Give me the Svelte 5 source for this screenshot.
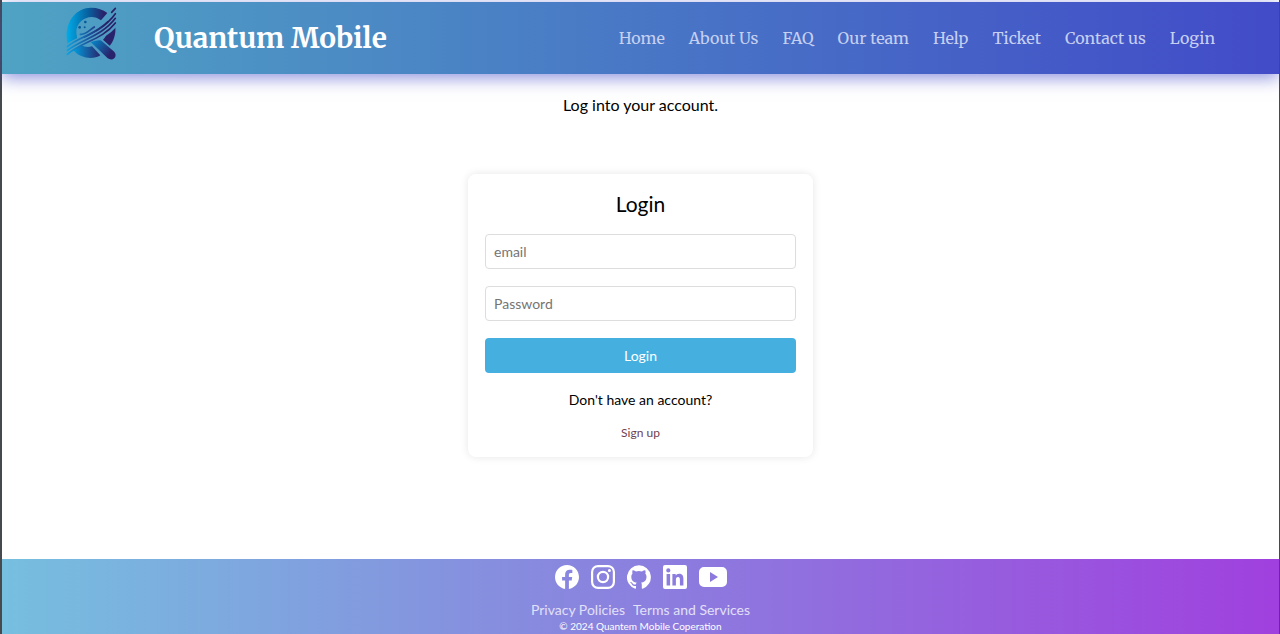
<script lang="ts">
  const navLinks = ['Home', 'About Us', 'FAQ', 'Our team', 'Help', 'Ticket', 'Contact us', 'Login'];

  const socials = [
    {
      name: 'Facebook',
      width: 24,
      path: 'M24 12.07C24 5.4 18.63 0 12 0S0 5.4 0 12.07C0 18.1 4.39 23.09 10.13 24v-8.44H7.08v-3.49h3.05V9.41c0-3.02 1.79-4.69 4.53-4.69 1.31 0 2.68.24 2.68.24v2.97h-1.51c-1.49 0-1.95.93-1.95 1.88v2.26h3.32l-.53 3.49h-2.79V24C19.61 23.09 24 18.1 24 12.07z'
    },
    {
      name: 'Instagram',
      width: 24,
      path: 'M7 0h10a7 7 0 0 1 7 7v10a7 7 0 0 1-7 7H7a7 7 0 0 1-7-7V7a7 7 0 0 1 7-7zm0 2.2A4.8 4.8 0 0 0 2.2 7v10A4.8 4.8 0 0 0 7 21.8h10a4.8 4.8 0 0 0 4.8-4.8V7A4.8 4.8 0 0 0 17 2.2zM12 5.8a6.2 6.2 0 1 1 0 12.4 6.2 6.2 0 0 1 0-12.4zm0 2.2a4 4 0 1 0 0 8 4 4 0 0 0 0-8zM18.4 4.1a1.5 1.5 0 1 1 0 3 1.5 1.5 0 0 1 0-3z'
    },
    {
      name: 'GitHub',
      width: 24,
      path: 'M12 .3a12 12 0 0 0-3.8 23.4c.6.1.8-.3.8-.6v-2.2c-3.3.7-4-1.4-4-1.4-.6-1.4-1.4-1.8-1.4-1.8-1.1-.7.1-.7.1-.7 1.2.1 1.8 1.2 1.8 1.2 1.1 1.8 2.8 1.3 3.500 1 .1-.8.4-1.3.8-1.6-2.700-.3-5.500-1.300-5.500-5.900 0-1.300.500-2.400 1.200-3.200-.1-.3-.5-1.5.1-3.2 0 0 1-.3 3.3 1.2a11.5 11.5 0 0 1 6 0c2.3-1.5 3.3-1.2 3.3-1.2.7 1.7.3 2.9.1 3.2.8.8 1.2 1.9 1.2 3.2 0 4.6-2.8 5.6-5.5 5.9.4.4.8 1.1.8 2.2v3.3c0 .3.2.7.8.6A12 12 0 0 0 12 .3z'
    },
    {
      name: 'LinkedIn',
      width: 24,
      path: 'M2 0h20a2 2 0 0 1 2 2v20a2 2 0 0 1-2 2H2a2 2 0 0 1-2-2V2a2 2 0 0 1 2-2zm1.6 9v11.4h3.5V9zM5.3 3.3a2.1 2.1 0 1 0 0 4.2 2.1 2.1 0 0 0 0-4.2zM9.4 9v11.4h3.5v-5.6c0-1.5.3-2.9 2.1-2.9s1.9 1.7 1.9 3v5.5h3.5v-6.2c0-3.1-.7-5.5-4.3-5.5-1.7 0-2.9.9-3.4 1.8V9z'
    },
    {
      name: 'YouTube',
      width: 28,
      path: 'M5 2h18a5 5 0 0 1 5 5v10a5 5 0 0 1-5 5H5a5 5 0 0 1-5-5V7a5 5 0 0 1 5-5zm6 5v10l8-5z'
    }
  ];

  let email = $state('');
  let password = $state('');
</script>

<div class="page">
  <header class="header">
    <div class="brand">
      <svg class="logo" viewBox="0 0 156 162" aria-hidden="true">
        <defs>
          <linearGradient id="ring" gradientUnits="userSpaceOnUse" x1="0" x2="150" y1="0" y2="0">
            <stop offset="0" stop-color="#00aeea" />
            <stop offset="0.45" stop-color="#075f9e" />
            <stop offset="0.75" stop-color="#29236b" />
          </linearGradient>
          <linearGradient id="foot" gradientUnits="userSpaceOnUse" x1="20" x2="105" y1="0" y2="0">
            <stop offset="0" stop-color="#00a0df" />
            <stop offset="1" stop-color="#29236b" />
          </linearGradient>
          <linearGradient id="handle" gradientUnits="userSpaceOnUse" x1="70" x2="130" y1="100" y2="145">
            <stop offset="0" stop-color="#0091d2" />
            <stop offset="1" stop-color="#29236b" />
          </linearGradient>
          <mask id="gap" maskUnits="userSpaceOnUse" x="0" y="0" width="156" height="162">
            <rect width="156" height="162" fill="#fff" />
            <path
              d="M-4 124C43 88 103 84 152 18M-4 136C47 100 107 90 152 34M-4 148C48 108 109 100 152 48"
              fill="none"
              stroke="#000"
              stroke-width="15"
            />
          </mask>
        </defs>
        <g mask="url(#gap)">
          <path fill="url(#ring)" d="M5 112C-9 55 24 2 75 2c20 0 36 6 49 16l-19 22C74 15 29 39 31 78l3 20z" />
          <path fill="url(#ring)" d="M122 77l26-17c2 21-5 43-17 56l-20-18c6-6 9-12 11-21z" />
        </g>
        <path fill="url(#foot)" d="M22 130c21 25 60 29 81 15L78 118c-14 4-24 1-32-4z" />
        <path fill="url(#handle)" d="M74 105c12-2 23-8 32-4l37 32c15 14-2 32-18 21z" />
        <g fill="none" stroke="url(#stripe)" stroke-width="5" stroke-linecap="round">
          <linearGradient id="stripe" gradientUnits="userSpaceOnUse" x1="0" x2="150" y1="0" y2="0">
            <stop offset="0" stop-color="#0aa5e4" />
            <stop offset="0.5" stop-color="#1d4d96" />
            <stop offset="0.8" stop-color="#2a2068" />
          </linearGradient>
          <path d="M4 119C43 86 103 82 148 20" />
          <path d="M4 130C47 97 107 88 148 34" />
          <path d="M4 142C48 104 109 98 148 48" />
          <path d="M43 82c16 2 25-11 42-22" />
          <path d="M54 91c28-15 49-24 72-47M137 16l11-12" />
        </g>
        <g fill="#075b98">
          <circle cx="41" cy="61" r="4" />
          <circle cx="58" cy="45" r="4" />
          <circle cx="56" cy="61" r="3" />
        </g>
      </svg>
      <h1>Quantum Mobile</h1>
    </div>
    <nav class="nav">
      {#each navLinks as link}
        <a href="#{link.toLowerCase().replace(' ', '-')}">{link}</a>
      {/each}
    </nav>
  </header>

  <main class="main">
    <p class="intro">Log into your account.</p>

    <form class="card" onsubmit={(e) => e.preventDefault()}>
      <h2>Login</h2>
      <input type="email" placeholder="email" aria-label="email" bind:value={email} />
      <input type="password" placeholder="Password" aria-label="Password" bind:value={password} />
      <button type="submit">Login</button>
      <p>Don't have an account?</p>
      <a href="#signup">Sign up</a>
    </form>
  </main>

  <footer class="footer">
    <div class="socials">
      {#each socials as social}
        <a href="#{social.name.toLowerCase()}" aria-label={social.name}>
          <svg width={social.width} height="24" viewBox="0 0 {social.width} 24" aria-hidden="true">
            <path fill="currentColor" fill-rule="evenodd" d={social.path} />
          </svg>
        </a>
      {/each}
    </div>
    <div class="policies">
      <a href="#privacy">Privacy Policies</a>
      <a href="#terms">Terms and Services</a>
    </div>
    <p class="copyright">© 2024 Quantem Mobile Coperation</p>
  </footer>
</div>

<style>
  :global(body) {
    margin: 0;
    background: #fff;
  }

  .page {
    box-sizing: border-box;
    min-height: 100vh;
    display: flex;
    flex-direction: column;
    padding-top: 2px;
    border-left: 2px solid #46494d;
    border-right: 1px solid #46494d;
    font-family: Lato, sans-serif;
    color: #000;
  }

  h1,
  h2,
  p {
    margin: 0;
    font-weight: 400;
  }

  a {
    text-decoration: none;
  }

  .header {
    display: flex;
    align-items: center;
    justify-content: space-between;
    height: 72px;
    padding: 0 64px;
    background: linear-gradient(to right, #4fa3c3, #424bc8);
    box-shadow: 0 4px 16px rgba(66, 75, 200, 0.6);
    font-family: Merriweather, 'Liberation Serif', serif;
  }

  .brand {
    display: flex;
    align-items: center;
    gap: 36px;
  }

  .logo {
    width: 52px;
    height: 54px;
    margin-bottom: 8px;
  }

  .brand h1 {
    font-size: 28px;
    line-height: 40px;
    font-weight: 700;
    color: #fff;
  }

  .nav {
    display: flex;
    gap: 24px;
  }

  .nav a {
    font-size: 16px;
    line-height: 24px;
    color: #c6d0f0;
  }

  .main {
    flex: 1;
    display: flex;
    flex-direction: column;
    align-items: center;
    gap: 57px;
    padding: 19px 16px 40px;
  }

  .intro {
    font-size: 16px;
    line-height: 24px;
  }

  .card {
    box-sizing: border-box;
    width: 100%;
    max-width: 345px;
    display: flex;
    flex-direction: column;
    align-items: center;
    padding: 16px 17px;
    border-radius: 8px;
    background: #fff;
    box-shadow: 0 0 8px rgba(0, 0, 0, 0.1);
  }

  .card h2 {
    margin-bottom: 16px;
    font-size: 21px;
    line-height: 28px;
  }

  .card input,
  .card button {
    box-sizing: border-box;
    width: 100%;
    height: 35px;
    margin: 0 0 17px;
    padding: 0 8px;
    border: 1px solid #ddd;
    border-radius: 4px;
    background: #fff;
    font-family: inherit;
    font-size: 14px;
  }

  .card input::placeholder {
    color: #757575;
  }

  .card button {
    border: none;
    background: #45b0e0;
    color: #fff;
    cursor: pointer;
  }

  .card p {
    margin-bottom: 16px;
    font-size: 14px;
    line-height: 19px;
  }

  .card a {
    font-size: 12px;
    line-height: 16px;
    color: #70404f;
  }

  .footer {
    display: flex;
    flex-direction: column;
    align-items: center;
    padding-top: 6px;
    background: linear-gradient(to right, #76bfdf, #a040de);
    color: #fff;
  }

  .socials {
    display: flex;
    gap: 12px;
    margin-bottom: 12px;
  }

  .socials a {
    display: flex;
    color: #fff;
  }

  .policies {
    display: flex;
    gap: 8px;
  }

  .policies a {
    font-size: 14px;
    line-height: 18px;
    color: #e2e0f8;
  }

  .copyright {
    font-size: 10px;
    line-height: 15px;
  }
</style>
